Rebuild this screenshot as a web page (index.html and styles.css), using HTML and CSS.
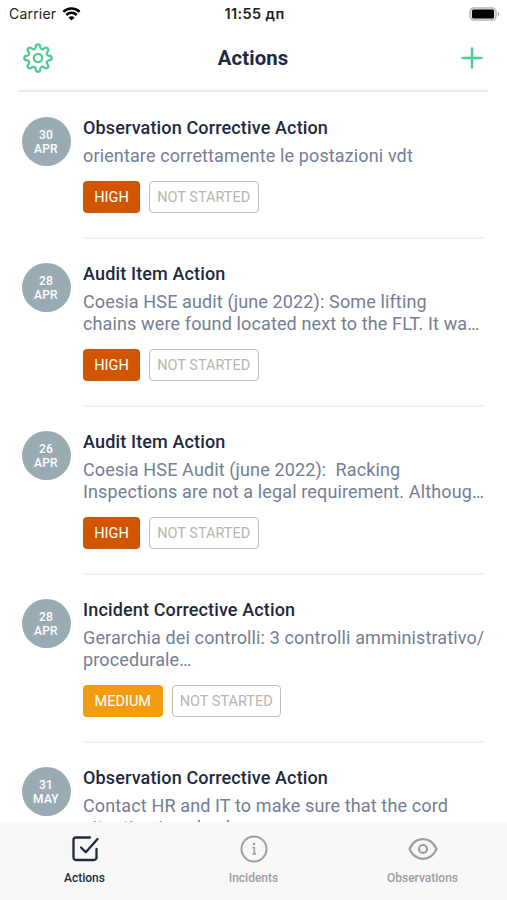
FILE: index.html
```html
<!DOCTYPE html>
<html lang="en">
<head>
<meta charset="utf-8">
<title>Actions</title>
<link rel="stylesheet" href="styles.css">
</head>
<body>
<div class="app">
  <div class="status">
    <div class="carrier"><span>Carrier</span>
      <svg width="19" height="14" viewBox="0 0 18 14" fill="none" stroke="#000" stroke-width="2.5"><path d="M.9 4.8a11.5 11.5 0 0 1 16.2 0"/><path d="M3.8 8a7.4 7.4 0 0 1 10.4 0"/><path d="M9 13.6 6 10.6a4.3 4.3 0 0 1 6 0z" fill="#000" stroke="none"/></svg>
    </div>
    <div class="time">11:55 дп</div>
    <svg class="battery" width="31" height="14" viewBox="0 0 31 14"><rect x=".9" y=".9" width="26.2" height="12.2" rx="4" fill="#ddd" stroke="#b4b4b4" stroke-width="1.3"/><rect x="3" y="2.6" width="22" height="8.8" rx="1.5" fill="#000"/><path d="M28.8 4.8c2 .8 2 3.6 0 4.4z" fill="#aaa"/></svg>
  </div>
  <header class="header">
    <svg width="30" height="30" viewBox="0 0 30 30" fill="none" stroke="#4fcb94" stroke-width="2.3" stroke-linejoin="round"><circle cx="15" cy="15" r="4.2"/><path d="M12.6 4.2C13 .3 17 .3 17.4 4.2C17.7 6.2 19.3 6.8 20.9 5.7C24 3.2 26.8 6 24.3 9.1C23.2 10.7 23.8 12.3 25.8 12.6C29.7 13 29.7 17 25.8 17.4C23.8 17.7 23.2 19.3 24.3 20.9C26.8 24 24 26.8 20.9 24.3C19.3 23.2 17.7 23.8 17.4 25.8C17 29.7 13 29.7 12.6 25.8C12.3 23.8 10.7 23.2 9.1 24.3C6 26.8 3.2 24 5.7 20.9C6.8 19.3 6.2 17.7 4.2 17.4C.3 17 .3 13 4.2 12.6C6.2 12.3 6.8 10.7 5.7 9.1C3.2 6 6 3.2 9.1 5.7C10.7 6.8 12.3 6.2 12.6 4.2Z"/></svg>
    <h1>Actions</h1>
    <svg class="add" width="22" height="22" viewBox="0 0 22 22" stroke="#4fcb94" stroke-width="2.4" stroke-linecap="round"><path d="M11 1.5v19M1.5 11h19"/></svg>
  </header>
  <main class="list">
    <article class="item">
      <div class="date"><span>30</span><span>APR</span></div>
      <div class="body"><h2>Observation Corrective Action</h2><p>orientare correttamente le postazioni vdt</p>
        <div class="tags"><span class="tag high">HIGH</span><span class="tag state">NOT STARTED</span></div></div>
    </article>
    <article class="item">
      <div class="date"><span>28</span><span>APR</span></div>
      <div class="body"><h2>Audit Item Action</h2><p>Coesia HSE audit (june 2022): Some lifting<br>chains were found located next to the FLT. It wa…</p>
        <div class="tags"><span class="tag high">HIGH</span><span class="tag state">NOT STARTED</span></div></div>
    </article>
    <article class="item">
      <div class="date"><span>26</span><span>APR</span></div>
      <div class="body"><h2>Audit Item Action</h2><p>Coesia HSE Audit (june 2022):&nbsp; Racking<br>Inspections are not a legal requirement. Althoug…</p>
        <div class="tags"><span class="tag high">HIGH</span><span class="tag state">NOT STARTED</span></div></div>
    </article>
    <article class="item">
      <div class="date"><span>28</span><span>APR</span></div>
      <div class="body"><h2>Incident Corrective Action</h2><p>Gerarchia dei controlli: 3 controlli amministrativo/<br>procedurale…</p>
        <div class="tags"><span class="tag medium">MEDIUM</span><span class="tag state">NOT STARTED</span></div></div>
    </article>
    <article class="item">
      <div class="date"><span>31</span><span>MAY</span></div>
      <div class="body"><h2>Observation Corrective Action</h2><p>Contact HR and IT to make sure that the cord<br>situation is solved</p></div>
    </article>
  </main>
  <nav class="tabs">
    <div class="tab active"><svg width="30" height="30" viewBox="0 0 30 30" fill="none" stroke="currentColor" stroke-width="2.3" stroke-linecap="round" stroke-linejoin="round"><path d="M20 3.5H6a2.500 2.500 0 0 0-2.500 2.500v17.500A2.500 2.500 0 0 0 6 26h18a2.500 2.500 0 0 0 2.500-2.500V15M11 13.500l4.800 4.800L27.500 5"/></svg><span>Actions</span></div>
    <div class="tab"><svg width="30" height="30" viewBox="0 0 30 30" fill="none" stroke="currentColor" stroke-width="2"><circle cx="15" cy="15" r="12.5"/><path d="M13.3 13.500H15.300V20.500M13.600 19.900h3.400" stroke-width="1.700"/><circle cx="15" cy="10" r="1.300" fill="currentColor" stroke="none"/></svg><span>Incidents</span></div>
    <div class="tab"><svg width="30" height="30" viewBox="0 0 30 30" fill="none" stroke="currentColor" stroke-width="2.2" stroke-linejoin="round"><path d="M1.500 15C7.500 1.900 22.500 1.900 28.500 15C22.500 28.100 7.500 28.100 1.500 15Z"/><circle cx="15" cy="15" r="4"/></svg><span>Observations</span></div>
  </nav>
</div>
</body>
</html>
```
FILE: styles.css
```css
* { box-sizing: border-box; }
body { margin: 0; background: #fff; font-family: Roboto, "Liberation Sans", sans-serif; }
h1, h2, p { margin: 0; }
svg { display: block; flex: none; }
.app { height: 900px; display: flex; flex-direction: column; overflow: hidden; }
.status { height: 27px; flex: none; padding: 0 7px 0 9px; display: grid; grid-template-columns: 1fr auto 1fr; align-items: center; font-family: Inter, sans-serif; font-size: 14px; color: #222; }
.carrier { display: flex; align-items: center; gap: 5.5px; letter-spacing: .2px; }
.time { font-size: 14.5px; font-weight: 600; letter-spacing: .4px; }
.battery { justify-self: end; }
.header { height: 65px; flex: none; margin: 0 19px; padding: 0 5px 2px 4px; display: grid; grid-template-columns: 1fr auto 1fr; align-items: center; border-bottom: 2px solid #e9ebec; }
.add { justify-self: end; }
h1 { font-size: 20.3px; font-weight: 700; color: #1e293f; letter-spacing: .1px; }
.list { flex: 1; min-height: 0; overflow: hidden; }
.item { display: flex; padding: 0 23px 0 21.5px; gap: 12.5px; }
.date { flex: none; width: 49px; height: 49px; margin-top: 24.6px; border-radius: 50%; background: #9aabb4; color: #fff; display: flex; flex-direction: column; align-items: center; justify-content: center; padding-top: 1px; font-size: 12px; line-height: 14px; font-weight: 500; letter-spacing: .2px; }
.body { flex: 1; min-width: 0; padding-top: 23.8px; border-bottom: 2px solid #f3f3f5; white-space: nowrap; }
h2 { font-size: 18px; line-height: 24px; font-weight: 500; color: #1e293f; letter-spacing: .14px; }
p { margin-top: 5px; font-size: 18px; line-height: 21.4px; color: #747e95; letter-spacing: .13px; }
.tags { display: flex; gap: 9px; padding: 15px 0 23.4px; }
.tag { height: 32px; border-radius: 4px; display: flex; align-items: center; justify-content: center; font-size: 14.5px; padding-top: 1px; }
.high { width: 57px; background: #d35400; color: #fff; }
.medium { width: 79.5px; background: #f39c12; color: #fff; }
.state { width: 109.5px; border: 1.5px solid #c4bcb8; color: #bbb4b0; }
.tabs { height: 78px; flex: none; background: #f8f8f8; display: grid; grid-template-columns: repeat(3, 1fr); }
.tab { display: flex; flex-direction: column; align-items: center; padding-top: 12px; gap: 7px; color: #9b9ea3; font-size: 12px; line-height: 14px; font-weight: 500; }
.active { color: #1e293f; }
```
